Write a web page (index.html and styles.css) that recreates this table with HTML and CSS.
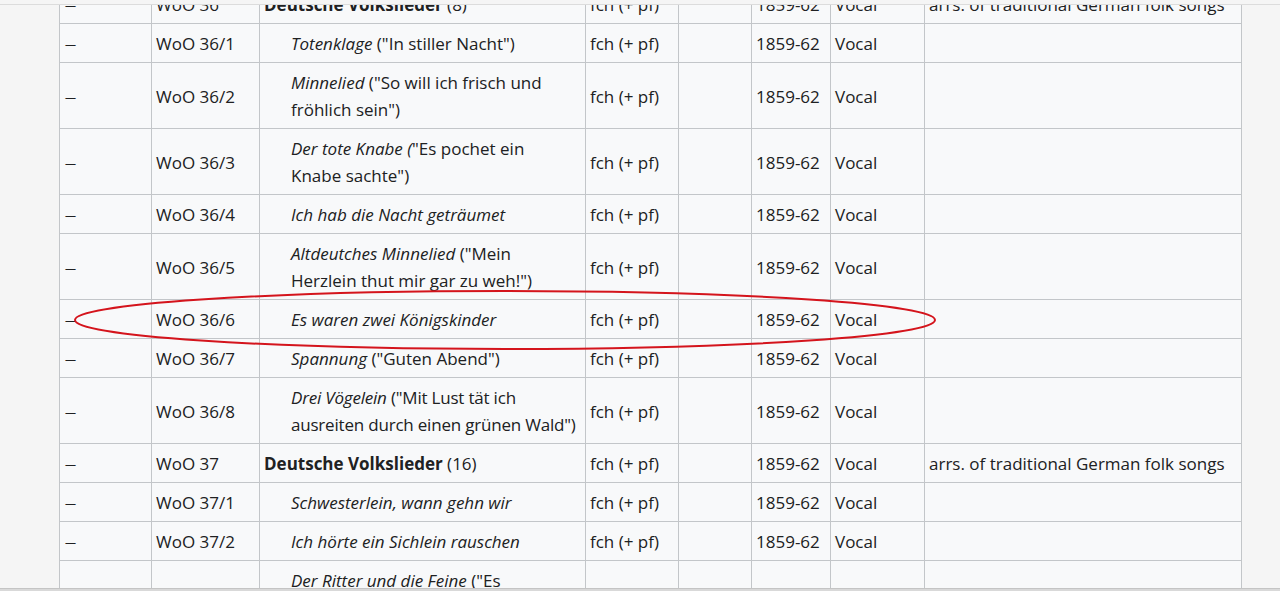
FILE: index.html
```
<!DOCTYPE html>
<html lang="de">
<head>
  <meta charset="UTF-8">
  <title>Brahms – Werke ohne Opuszahl</title>
  <link rel="stylesheet" href="styles.css">
</head>
<body>

  <div class="top-edge"></div>

  <div class="page">
    <table class="works">
      <colgroup>
        <col class="c-op">
        <col class="c-woo">
        <col class="c-title">
        <col class="c-scoring">
        <col class="c-key">
        <col class="c-date">
        <col class="c-genre">
        <col class="c-notes">
      </colgroup>
      <tbody>
        <tr>
          <td class="op">—</td><td>WoO 36</td>
          <td><b>Deutsche Volkslieder</b> (8)</td>
          <td>fch (+ pf)</td><td></td><td>1859-62</td><td>Vocal</td>
          <td>arrs. of traditional German folk songs</td>
        </tr>
        <tr>
          <td class="op">—</td><td>WoO 36/1</td>
          <td><div class="sub"><i>Totenklage</i> ("In stiller Nacht")</div></td>
          <td>fch (+ pf)</td><td></td><td>1859-62</td><td>Vocal</td><td></td>
        </tr>
        <tr>
          <td class="op">—</td><td>WoO 36/2</td>
          <td><div class="sub"><i>Minnelied</i> ("So will ich frisch und<br>fröhlich sein")</div></td>
          <td>fch (+ pf)</td><td></td><td>1859-62</td><td>Vocal</td><td></td>
        </tr>
        <tr>
          <td class="op">—</td><td>WoO 36/3</td>
          <td><div class="sub"><i>Der tote Knabe (</i>"Es pochet ein<br>Knabe sachte")</div></td>
          <td>fch (+ pf)</td><td></td><td>1859-62</td><td>Vocal</td><td></td>
        </tr>
        <tr>
          <td class="op">—</td><td>WoO 36/4</td>
          <td><div class="sub"><i>Ich hab die Nacht geträumet</i></div></td>
          <td>fch (+ pf)</td><td></td><td>1859-62</td><td>Vocal</td><td></td>
        </tr>
        <tr>
          <td class="op">—</td><td>WoO 36/5</td>
          <td><div class="sub"><i>Altdeutches Minnelied</i> ("Mein<br>Herzlein thut mir gar zu weh!")</div></td>
          <td>fch (+ pf)</td><td></td><td>1859-62</td><td>Vocal</td><td></td>
        </tr>
        <tr class="marked">
          <td class="op">—</td><td>WoO 36/6</td>
          <td><div class="sub"><i>Es waren zwei Königskinder</i></div></td>
          <td>fch (+ pf)</td><td></td><td>1859-62</td><td>Vocal</td>
          <td>
            <!-- hand-drawn ring round this row -->
            <svg class="ring" width="870" height="66" viewBox="0 0 870 66">
              <ellipse cx="432" cy="32" rx="430" ry="29" fill="none" stroke="#d4141c" stroke-width="2"/>
            </svg>
          </td>
        </tr>
        <tr>
          <td class="op">—</td><td>WoO 36/7</td>
          <td><div class="sub"><i>Spannung</i> ("Guten Abend")</div></td>
          <td>fch (+ pf)</td><td></td><td>1859-62</td><td>Vocal</td><td></td>
        </tr>
        <tr>
          <td class="op">—</td><td>WoO 36/8</td>
          <td><div class="sub tight"><i>Drei Vögelein</i> ("Mit Lust tät ich<br>ausreiten durch einen grünen Wald")</div></td>
          <td>fch (+ pf)</td><td></td><td>1859-62</td><td>Vocal</td><td></td>
        </tr>
        <tr>
          <td class="op">—</td><td>WoO 37</td>
          <td><b>Deutsche Volkslieder</b> (16)</td>
          <td>fch (+ pf)</td><td></td><td>1859-62</td><td>Vocal</td>
          <td>arrs. of traditional German folk songs</td>
        </tr>
        <tr>
          <td class="op">—</td><td>WoO 37/1</td>
          <td><div class="sub"><i>Schwesterlein, wann gehn wir</i></div></td>
          <td>fch (+ pf)</td><td></td><td>1859-62</td><td>Vocal</td><td></td>
        </tr>
        <tr>
          <td class="op">—</td><td>WoO 37/2</td>
          <td><div class="sub"><i>Ich hörte ein Sichlein rauschen</i></div></td>
          <td>fch (+ pf)</td><td></td><td>1859-62</td><td>Vocal</td><td></td>
        </tr>
        <tr>
          <td class="op">—</td><td>WoO 37/3</td>
          <td><div class="sub"><i>Der Ritter und die Feine</i> ("Es<br>war ein' schöne Jungfer fein")</div></td>
          <td>fch (+ pf)</td><td></td><td>1859-62</td><td>Vocal</td><td></td>
        </tr>
      </tbody>
    </table>
  </div>

  <div class="bottom-edge"></div>

</body>
</html>
```

FILE: styles.css
```
body {
  margin: 0;
  background: #f5f5f5;
  font-family: "Open Sans", "DejaVu Sans", sans-serif;
  font-size: 17px;
  color: #202122;
  overflow: hidden;
}

.top-edge {
  position: fixed;
  top: 0;
  left: 0;
  right: 0;
  height: 4px;
  background: #f5f5f5;
  border-bottom: 1px solid #dcdcdc;
  z-index: 2;
}

.bottom-edge {
  position: fixed;
  bottom: 0;
  left: 0;
  right: 0;
  height: 2px;
  background: #d9d9d9;
  border-top: 1px solid #c4c4c4;
  z-index: 2;
}

.page {
  padding-left: 59px;
  margin-top: -16px;
}

table.works {
  width: 1182px;
  table-layout: fixed;
  border-collapse: collapse;
  background: #f8f9fa;
}

col.c-op { width: 92px; }
col.c-woo { width: 108px; }
col.c-title { width: 326px; }
col.c-scoring { width: 93px; }
col.c-key { width: 73px; }
col.c-date { width: 79px; }
col.c-genre { width: 94px; }
col.c-notes { width: 317px; }

table.works td {
  border: 1px solid #c3c6c9;
  padding: 6px 4px 5px;
  line-height: 27px;
  vertical-align: middle;
  white-space: nowrap;
}

table.works td.op {
  font-size: 11px;
  padding-left: 5px;
}

table.works td b {
  font-weight: 700;
}

.sub {
  padding-left: 27px;
}

.sub.tight {
  letter-spacing: -0.2px;
}

tr.marked td:last-child {
  position: relative;
}

.ring {
  position: absolute;
  left: -852px;
  top: -12px;
  pointer-events: none;
}
```
